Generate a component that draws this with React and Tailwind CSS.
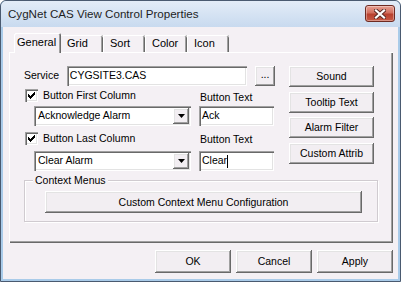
import React from "react";

const raised =
  "bg-[#f2eef2] shadow-[inset_-1px_-1px_0_#696969,inset_1px_1px_0_#ffffff,inset_-2px_-2px_0_#a0a0a0,inset_2px_2px_0_#e3e3e3]";
const sunken =
  "bg-white shadow-[inset_1px_1px_0_#a0a0a0,inset_2px_2px_0_#696969,inset_-1px_-1px_0_#ffffff,inset_-2px_-2px_0_#e3e3e3]";

const Button = ({ children, className = "" }) => (
  <button
    className={`${raised} flex items-center justify-center text-[10.5px] leading-none text-black ${className}`}
  >
    {children}
  </button>
);

// classic 7x7 tick, drawn as 3px columns
const Checkbox = () => (
  <span className={`${sunken} w-[13px] h-[13px] flex items-center justify-center shrink-0`}>
    <svg width="7" height="7" viewBox="0 0 7 7" shapeRendering="crispEdges">
      {[2, 3, 4, 3, 2, 1, 0].map((y, x) => (
        <rect key={x} x={x} y={y} width="1" height="3" fill="#000" />
      ))}
    </svg>
  </span>
);

const Combo = ({ value }) => (
  <div className={`${sunken} w-[157px] h-[20px] flex items-center pl-[4px] pr-[2px]`}>
    <span className="flex-1">{value}</span>
    <span className={`${raised} w-[16px] h-[16px] flex items-center justify-center`}>
      <svg width="7" height="4" viewBox="0 0 7 4">
        <path d="M0 0h7L3.5 4z" fill="#000" />
      </svg>
    </span>
  </div>
);

const TextBox = ({ value, width, caret }) => (
  <div className={`${sunken} h-[20px] flex items-center pl-[3px] ${width}`}>
    {value}
    {caret && <span className="w-px h-[13px] bg-black" />}
  </div>
);

const Tab = ({ children, first }) => (
  <div
    className={`w-[42px] h-[17px] mb-px pl-[6px] pt-[2px] leading-[13px] rounded-tr-[2px] shadow-[inset_0_1px_0_#ffffff,inset_-1px_0_0_#696969,inset_-2px_0_0_#a0a0a0] ${
      first ? "w-[40px] pl-[5px]" : "border-l border-white"
    }`}
  >
    {children}
  </div>
);

export default function App() {
  return (
    <div className="w-[401px] h-[282px] border border-[#4a5a70] rounded-t-[6px] bg-[#a9cbe9] font-['Liberation_Sans',Arial,sans-serif] text-[10.5px] text-black overflow-hidden">
      {/* title bar */}
      <div className="h-[26px] flex items-start bg-[linear-gradient(#e3ecf7,#c8daef)] rounded-t-[5px]">
        <span className="ml-[7px] mt-[6px] text-[11.6px] leading-[14px] text-[#1e1e1e]">
          CygNet CAS View Control Properties
        </span>
        <span className="ml-auto mr-[5px] mt-[4px] w-[30px] h-[17px] rounded-[3px] border border-[#6e2a22] bg-[linear-gradient(#e8a194,#d2705f_45%,#b8412f_55%,#c85a45)] flex items-center justify-center shadow-[inset_0_0_0_1px_rgba(255,255,255,0.35)]">
          <svg width="12" height="10" viewBox="0 0 12 10">
            <path d="M2 1.5l8 7M10 1.5l-8 7" stroke="#5a2a25" strokeWidth="4" strokeLinecap="square" />
            <path d="M2 1.5l8 7M10 1.5l-8 7" stroke="#ffffff" strokeWidth="2.2" strokeLinecap="square" />
          </svg>
        </span>
      </div>

      {/* client area */}
      <div className="mx-[2px] h-[252px] bg-[#f4f0f4] flex flex-col">
        {/* tabs */}
        <div className="ml-[11px] mt-[6px] h-[20px] flex items-end relative z-10 -mb-px text-[11px]">
          <div className="w-[47px] h-[20px] pl-[3px] pt-[3px] leading-[13px] bg-[#f4f0f4] rounded-t-[2px] shadow-[inset_1px_1px_0_#ffffff,inset_-1px_0_0_#696969,inset_-2px_0_0_#a0a0a0]">
            General
          </div>
          <Tab first>Grid</Tab>
          <Tab>Sort</Tab>
          <Tab>Color</Tab>
          <Tab>Icon</Tab>
        </div>

        {/* tab panel */}
        <div className="ml-[6px] w-[384px] h-[191px] shrink-0 shadow-[inset_1px_1px_0_#ffffff,inset_-1px_-1px_0_#696969,inset_-2px_-2px_0_#a0a0a0]">
          <div className="flex">
            <div className="w-[266px] flex flex-col">
              <div className="mt-[14px] h-[20px] flex items-center">
                <span className="ml-[15px] w-[43px]">Service</span>
                <TextBox value="CYGSITE3.CAS" width="w-[181px]" />
                <Button className="ml-[8px] w-[20px] h-[20px] pb-[4px]">...</Button>
              </div>

              <div className="h-[20px] flex">
                <div className="ml-[16px] mt-[3px] w-[175px] h-[13px] flex items-center gap-[5px]">
                  <Checkbox />
                  <span>Button First Column</span>
                </div>
                <span className="mt-[5px] leading-[13px]">Button Text</span>
              </div>

              <div className="h-[20px] flex">
                <div className="ml-[25px]">
                  <Combo value="Acknowledge Alarm" />
                </div>
                <div className="ml-[8px]">
                  <TextBox value="Ack" width="w-[75px]" />
                </div>
              </div>

              <div className="h-[25px] flex">
                <div className="ml-[16px] mt-[6px] w-[175px] h-[13px] flex items-center gap-[5px]">
                  <Checkbox />
                  <span>Button Last Column</span>
                </div>
                <span className="mt-[7px] leading-[13px]">Button Text</span>
              </div>

              <div className="h-[20px] flex">
                <div className="ml-[25px]">
                  <Combo value="Clear Alarm" />
                </div>
                <div className="ml-[8px]">
                  <TextBox value="Clear" width="w-[75px]" caret />
                </div>
              </div>
            </div>

            <div className="ml-[14px] w-[85px] flex flex-col">
              <Button className="mt-[14px] h-[21px]">Sound</Button>
              <Button className="mt-[5px] h-[21px]">Tooltip Text</Button>
              <Button className="mt-[4px] h-[21px]">Alarm Filter</Button>
              <Button className="mt-[5px] h-[21px]">Custom Attrib</Button>
            </div>
          </div>

          {/* group box */}
          <div className="relative ml-[15px] mt-[9px] w-[354px] h-[42px] border border-[#d0cbd0] shadow-[1px_1px_0_#ffffff,inset_1px_1px_0_#ffffff] pt-[10px]">
            <span className="absolute top-[-7px] left-[8px] px-[2px] leading-[13px] bg-[#f4f0f4]">
              Context Menus
            </span>
            <Button className="ml-[20px] w-[317px] h-[22px]">Custom Context Menu Configuration</Button>
          </div>
        </div>

        {/* dialog buttons */}
        <div className="mt-[7px] pr-[5px] flex justify-end gap-[5px]">
          <Button className="w-[76px] h-[23px]">OK</Button>
          <Button className="w-[76px] h-[23px]">Cancel</Button>
          <Button className="w-[76px] h-[23px]">Apply</Button>
        </div>
      </div>
    </div>
  );
}
